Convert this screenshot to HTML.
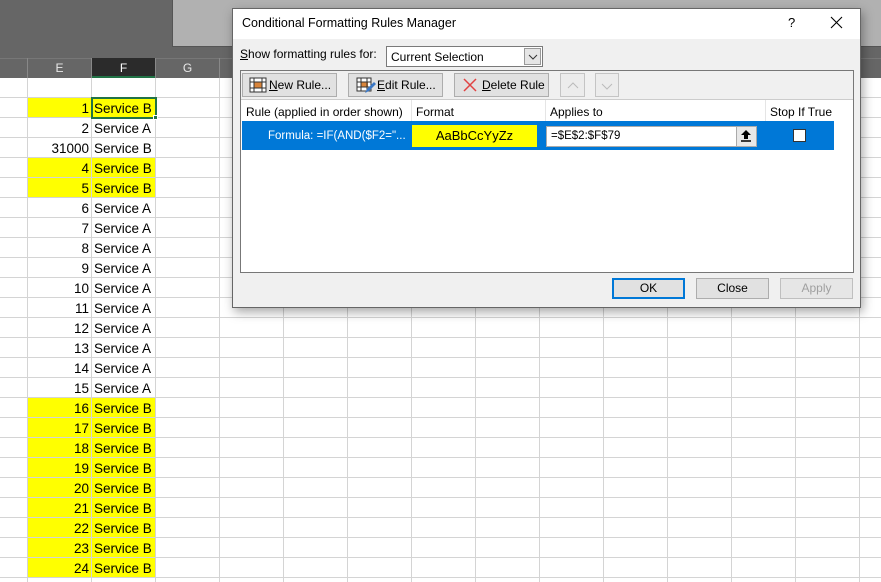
<!DOCTYPE html>
<html><head><style>
*{margin:0;padding:0;box-sizing:border-box}
body{width:881px;height:582px;overflow:hidden;position:relative;font-family:"Liberation Sans",sans-serif;background:#fff}
.a{position:absolute}
.grid{left:0;top:78px;width:881px;height:504px;background:
repeating-linear-gradient(90deg,transparent 0,transparent 27px,#d4d4d4 27px,#d4d4d4 28px,transparent 28px,transparent 64px),
repeating-linear-gradient(180deg,transparent 0,transparent 19px,#d4d4d4 19px,#d4d4d4 20px);background-position:0 0,0 0}
.cell{position:absolute;height:19px;font-size:13.5px;line-height:21px;color:#000}
.e{left:28px;width:63px;text-align:right;padding-right:2px}
.f{left:92px;width:63px;padding-left:2px}
.y{background:#ffff00}
.hdr{top:58px;height:20px;width:63px;color:#e8e8e8;font-size:12px;text-align:center;line-height:20px}
.btn{position:absolute;background:#e1e1e1;border:1px solid #adadad;font-size:12px;line-height:22px;color:#000}
.dlg{font-size:12px;color:#000}
</style></head><body>
<div class="a" style="left:0;top:0;width:881px;height:78px;background:#666"></div>
<div class="a" style="left:172px;top:0;width:709px;height:47px;background:#b1b1b1;border-left:1px solid #555;border-bottom:1px solid #555"></div>
<div class="a" style="left:0;top:58px;width:881px;height:20px;background:#666;border-top:1px solid #777"></div>
<div class="a" style="left:27px;top:58px;width:1px;height:20px;background:#888"></div>
<div class="a" style="left:91px;top:58px;width:1px;height:20px;background:#888"></div>
<div class="a" style="left:155px;top:58px;width:1px;height:20px;background:#888"></div>
<div class="a" style="left:219px;top:58px;width:1px;height:20px;background:#888"></div>
<div class="a hdr" style="left:28px">E</div>
<div class="a hdr" style="left:92px;background:#2b2b2b;border-bottom:2px solid #217346;color:#fff">F</div>
<div class="a hdr" style="left:156px">G</div>
<div class="a grid"></div>
<div id="rows"></div>
<div class="a" style="left:91px;top:97px;width:66px;height:22px;border:2px solid #217346"></div>
<div class="a" style="left:153px;top:115px;width:5px;height:5px;background:#217346;border:1px solid #fff"></div>

<div class="a" style="left:232px;top:8px;width:629px;height:300px;background:#f0f0f0;border:1px solid #666;box-shadow:2px 4px 10px rgba(0,0,0,.35)"></div>
<div class="a" style="left:233px;top:9px;width:627px;height:30px;background:#fff"></div>
<div class="a dlg" style="left:242px;top:16px;font-size:12.5px">Conditional Formatting Rules Manager</div>
<div class="a dlg" style="left:788px;top:15px;font-size:13px">?</div>
<svg class="a" style="left:830px;top:16px" width="13" height="13"><path d="M1 1L12 12M12 1L1 12" stroke="#000" stroke-width="1.1"/></svg>
<div class="a dlg" style="left:240px;top:47px"><u>S</u>how formatting rules for:</div>
<div class="a" style="left:386px;top:46px;width:157px;height:21px;background:#fff;border:1px solid #7a7a7a"></div>
<div class="a dlg" style="left:391px;top:50px">Current Selection</div>
<div class="a" style="left:524px;top:48px;width:17px;height:17px;background:#e5e5e5;border:1px solid #999"></div>
<svg class="a" style="left:528px;top:54px" width="10" height="6"><path d="M1 1L5 5L9 1" stroke="#333" fill="none"/></svg>
<div class="a" style="left:240px;top:70px;width:614px;height:203px;border:1px solid #777;background:#f0f0f0"></div>
<div class="btn" style="left:242px;top:73px;width:95px;height:24px;padding-left:26px"><u>N</u>ew Rule...</div>
<svg class="a" style="left:249px;top:77px" width="18" height="16"><rect x="1" y="1" width="16" height="14" fill="#fff" stroke="#333"/><rect x="5" y="5" width="8" height="6" fill="#d9853b"/><path d="M1 5H17M1 11H17M5 1V15M13 1V15" stroke="#333"/></svg>
<div class="btn" style="left:348px;top:73px;width:95px;height:24px;padding-left:28px"><u>E</u>dit Rule...</div>
<svg class="a" style="left:356px;top:77px" width="20" height="17"><rect x="1" y="1" width="14" height="13" fill="#fff" stroke="#333"/><rect x="5" y="5" width="7" height="5" fill="#d9853b"/><path d="M1 5H15M1 10H15M5 1V14M11 1V14" stroke="#333"/><path d="M9 16L11 12L18 5L20 7L13 14Z" fill="#3b78c6"/></svg>
<div class="btn" style="left:454px;top:73px;width:95px;height:24px;padding-left:27px"><u>D</u>elete Rule</div>
<svg class="a" style="left:463px;top:78px" width="14" height="14"><path d="M1 1L13 13M13 1L1 13" stroke="#e04343" stroke-width="1.5"/></svg>
<div class="btn" style="left:560px;top:73px;width:25px;height:24px;border-color:#c4c4c4;background:#ececec"></div>
<svg class="a" style="left:567px;top:82px" width="12" height="7"><path d="M1 6L6 1L11 6" stroke="#bbb" fill="none"/></svg>
<div class="btn" style="left:595px;top:73px;width:24px;height:24px;border-color:#c4c4c4;background:#ececec"></div>
<svg class="a" style="left:601px;top:83px" width="12" height="7"><path d="M1 1L6 6L11 1" stroke="#bbb" fill="none"/></svg>
<div class="a" style="left:241px;top:99px;width:612px;height:173px;background:#fff;border-top:1px solid #ccc"></div>
<div class="a" style="left:411px;top:100px;width:1px;height:21px;background:#e5e5e5"></div>
<div class="a" style="left:545px;top:100px;width:1px;height:21px;background:#e5e5e5"></div>
<div class="a" style="left:765px;top:100px;width:1px;height:21px;background:#e5e5e5"></div>
<div class="a dlg" style="left:246px;top:105px">Rule (applied in order shown)</div>
<div class="a dlg" style="left:416px;top:105px">Format</div>
<div class="a dlg" style="left:550px;top:105px">Applies to</div>
<div class="a dlg" style="left:770px;top:105px">Stop If True</div>
<div class="a" style="left:242px;top:121px;width:592px;height:29px;background:#0078d7"></div>
<div class="a dlg" style="left:268px;top:130px;color:#fff;font-size:11.5px">Formula: =IF(AND($F2="...</div>
<div class="a" style="left:412px;top:125px;width:125px;height:22px;background:#ffff00;text-align:center;font-size:13px;line-height:22px">AaBbCcYyZz</div>
<div class="a" style="left:546px;top:126px;width:211px;height:21px;background:#fff;border:1px solid #aaa"></div>
<div class="a dlg" style="left:551px;top:130px;font-size:11.5px">=$E$2:$F$79</div>
<div class="a" style="left:736px;top:127px;width:20px;height:19px;background:#e8e8e8;border-left:1px solid #aaa"></div>
<svg class="a" style="left:740px;top:129px" width="12" height="14"><path d="M6 1L1 6H4V10H8V6H11Z" fill="#000"/><path d="M1 12H11" stroke="#000" stroke-width="1.5"/></svg>
<div class="a" style="left:793px;top:129px;width:13px;height:13px;background:#fff;border:1px solid #333"></div>
<div class="btn" style="left:612px;top:278px;width:73px;height:21px;border:2px solid #0078d7;text-align:center;line-height:17px">OK</div>
<div class="btn" style="left:696px;top:278px;width:73px;height:21px;text-align:center;line-height:19px">Close</div>
<div class="btn" style="left:780px;top:278px;width:73px;height:21px;text-align:center;line-height:19px;color:#a0a0a0;border-color:#bfbfbf;background:#e6e6e6">Apply</div>

<script>
var v=['1','2','31000','4','5','6','7','8','9','10','11','12','13','14','15','16','17','18','19','20','21','22','23','24'];
var yb=[1,0,1,1,1,0,0,0,0,0,0,0,0,0,0,1,1,1,1,1,1,1,1,1];
var yl=[1,0,0,1,1,0,0,0,0,0,0,0,0,0,0,1,1,1,1,1,1,1,1,1];
var h='';
for(var i=0;i<24;i++){var t=98+i*20;var c=yl[i]?' y':'';
h+='<div class="cell e'+c+'" style="top:'+t+'px">'+v[i]+'</div><div class="cell f'+c+'" style="top:'+t+'px">Service '+(yb[i]?'B':'A')+'</div>';}
document.getElementById('rows').innerHTML=h;
</script>
</body></html>
